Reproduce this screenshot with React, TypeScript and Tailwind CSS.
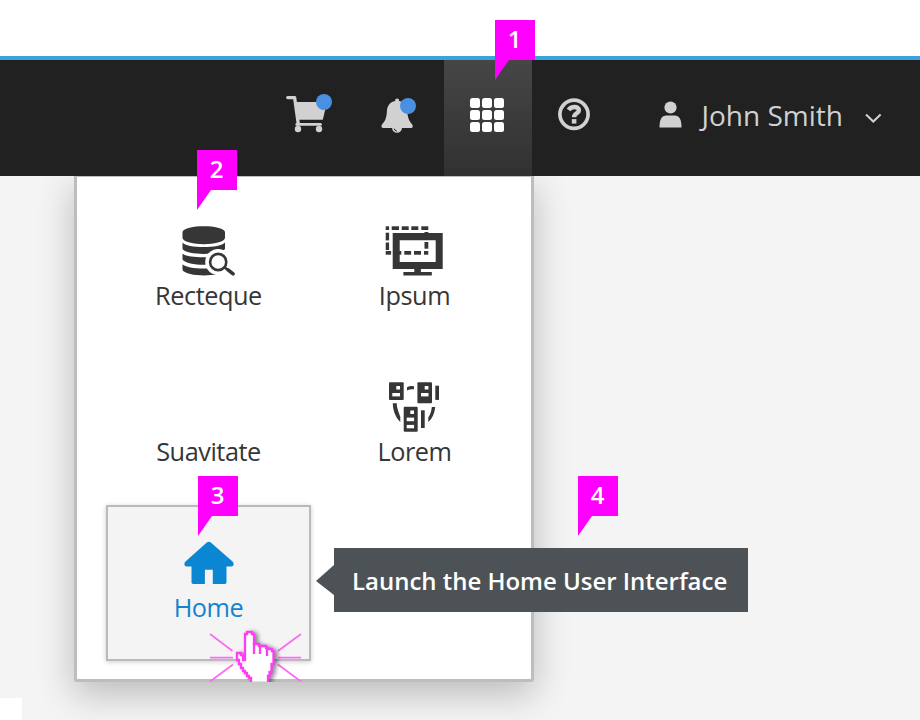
import type { ReactNode } from "react";

function CartIcon() {
  return (
    <svg className="h-14 w-14" viewBox="284 90 56 56" fill="#d1d1d1">
      <path d="M287.7 97.6H294.6L298.3 124" fill="none" stroke="#d1d1d1" strokeWidth="3.3" strokeLinecap="round" strokeLinejoin="round" />
      <path d="M296 102H327L322.8 119.8H299Z" />
      <path d="M296.8 124.4H320.5" stroke="#d1d1d1" strokeWidth="2.8" strokeLinecap="round" />
      <circle cx="298" cy="129" r="3.2" />
      <circle cx="319" cy="129" r="3.2" />
      <circle cx="324" cy="102" r="8" fill="#4a90e2" />
    </svg>
  );
}

function BellIcon() {
  return (
    <svg className="h-14 w-14" viewBox="372 90 56 56" fill="#d1d1d1">
      <path d="M395.2 101a2 2 0 1 1 3.8 0C404.5 102 407 106 407.3 111C407.6 118 409.5 121.5 412.2 124.5C413.3 126 413 128 411 128H383.2C381.2 128 381 126 382 124.5C385 121.5 386.6 118 386.9 111C387.2 106 389.7 102 395.2 101Z" />
      <path d="M392 127.5a5 5.3 0 0 0 10 0Z" />
      <path d="M394.2 128.7q.5 2.2 2.6 2.4" fill="none" stroke="#212121" strokeWidth="1" />
      <circle cx="408" cy="106" r="8" fill="#4a90e2" />
    </svg>
  );
}

function HelpIcon() {
  return (
    <svg className="h-14 w-14" viewBox="548 90 56 56" fill="none" stroke="#d1d1d1">
      <circle cx="574" cy="114.3" r="14.1" strokeWidth="3.7" />
      <path d="M568.6 109.9C571 106.3 578.9 105.8 578.9 110.3C578.9 113.4 574.1 113.2 574.1 117.2" strokeWidth="4.5" />
      <path d="M571.8 119.1H576.4V123.6H571.8Z" fill="#d1d1d1" stroke="none" />
    </svg>
  );
}

function UserIcon() {
  return (
    <svg className="h-7 w-[23px]" viewBox="658.5 101.5 23 28" fill="#d1d1d1">
      <circle cx="670" cy="108" r="6.1" />
      <path d="M659 128C659 120 661 116 666 116H674C679 116 681 120 681 128Z" />
    </svg>
  );
}

function DatabaseIcon() {
  return (
    <svg className="h-14 w-[60px]" viewBox="178.500 222 60 56" fill="#363636">
      <path d="M182 232C184 224.4 222.600 224.400 224.500 232V238C222.600 246.200 184 246.200 182 238Z" />
      <path d="M182 242.400C186 248.500 220 248.500 224.500 242.400V249C219 255.500 187 255.500 182 249Z" />
      <path d="M182 253.500C186 258.500 220 258.500 224.500 253.500V259.500C219 266.600 187 266.600 182 259.500Z" />
      <path d="M182 264.300C187 270 219 270 224.500 264.300V270C221 277.200 186 277.200 182 270Z" />
      <circle cx="217.700" cy="262" r="13" fill="#fff" />
      <path d="M224 267.500L233 276" stroke="#fff" strokeWidth="8" />
      <circle cx="217.700" cy="262" r="8.100" fill="none" stroke="#363636" strokeWidth="2.600" />
      <path d="M224 267.300L227 269.700" stroke="#363636" strokeWidth="2.400" />
      <path d="M227.500 269.800L232.600 273.800" stroke="#363636" strokeWidth="3.600" strokeLinecap="round" />
    </svg>
  );
}

const dashes = [
  [385.7, 226.3, 3.4, 3.7], [391.7, 226.3, 7.3, 3.7], [401.7, 226.3, 7, 3.7], [411.3, 226.3, 7, 3.7], [421.3, 226.3, 7, 3.7],
  [385.7, 232.7, 3.4, 7.7], [385.7, 242.5, 3.4, 7.5], [385.7, 251, 5.4, 3.7],
  [396.7, 251, 4.6, 3.7], [404.3, 251, 6.8, 3.7], [414, 251, 7, 3.7], [424, 251, 4.3, 3.7],
  [424.5, 232, 3.8, 2], [424.5, 242, 3.8, 6.7],
];

function ScreenIcon() {
  return (
    <svg className="h-14 w-[62px]" viewBox="384 222 62 56" fill="#363636">
      <path fillRule="evenodd" d="M392.700 233H442.700V269H392.700ZM399.700 240.300V262H435.700V240.300Z" />
      <path d="M414.300 268.500H420.900V272H431.800V275.600H403.400V272H414.300Z" />
      {dashes.map(([x, y, w, h]) => (
        <rect key={`${x}-${y}`} x={x} y={y} width={w} height={h} />
      ))}
    </svg>
  );
}

function ServersIcon() {
  return (
    <svg className="h-14 w-14" viewBox="387 378 56 56" fill="#363636">
      <rect x="389" y="382.300" width="14.700" height="17.600" rx="1" />
      <rect x="417.400" y="382.300" width="14.600" height="21" rx="1" />
      <rect x="403.700" y="406.700" width="14" height="25" rx="1" />
      <g fill="#fff">
        <rect x="396.300" y="386" width="3.700" height="3.500" />
        <rect x="392.300" y="393" width="7.700" height="3.400" />
        <rect x="424.700" y="386" width="3.700" height="3.500" />
        <rect x="421" y="393" width="7.500" height="3.400" />
        <rect x="410.300" y="410.500" width="3.700" height="3.500" />
        <rect x="406.700" y="417.600" width="7.400" height="3.600" />
        <rect x="406.700" y="424.900" width="7.400" height="3.400" />
      </g>
      <rect x="435.300" y="385.700" width="3.700" height="14.200" />
      <rect x="421" y="410.300" width="3.700" height="17.700" />
      <path d="M407 387.300Q410.500 385.300 414 386.300V389.300Q410.500 388.700 407 390.500Z" />
      <path d="M392.800 403.300H396.800C396.500 408 399.500 414 400.300 417V422C396 418 392.800 411 392.800 403.300Z" />
      <path d="M431.800 407H435.200C434.500 413 432.500 418.500 428.300 422V417.500C430.500 414 431.500 411 431.800 407Z" />
    </svg>
  );
}

function HomeIcon() {
  return (
    <svg className="h-14 w-14" viewBox="180.500 534 56 56" fill="#0a86d3">
      <path fillRule="evenodd" d="M206.300 542.600Q208.300 540.900 210.300 542.600L232 561.500C234 563.500 233 566.400 231 566.400H226V582.300Q226 584 224.300 584H212.300V569.800H204.400V584H192.700Q191 584 191 582.300V566.400H186C184 566.400 183 563.500 185 561.500Z" />
    </svg>
  );
}

function Tile({ icon, label, active = false }: { icon?: ReactNode; label: string; active?: boolean }) {
  return (
    <button
      className={`flex h-[156px] w-[205px] flex-col items-center border-2 pt-[27px] text-[25.3px] leading-[34px] tracking-[-0.45px] ${
        active ? "border-[#bababa] bg-[#f4f4f4] text-[#1583cf] shadow-[0_1px_5px_rgba(0,0,0,0.2)]" : "border-transparent text-[#363636]"
      }`}
    >
      <span className="flex h-14 items-center">{icon}</span>
      <span>{label}</span>
    </button>
  );
}

function Marker({ n, place }: { n: number; place: string }) {
  return (
    <div className={`absolute z-30 h-[60px] w-10 ${place}`}>
      <div className="flex h-10 items-center justify-center bg-[#ff00ff] pr-px text-[24px] font-semibold text-white">
        <span className="-mt-[2px] leading-10">{n}</span>
      </div>
      <svg className="block h-5 w-10" viewBox="0 0 40 20" fill="#ff00ff">
        <path d="M0 0H14L0 20Z" />
      </svg>
    </div>
  );
}

function ClickPointer() {
  return (
    <svg className="absolute left-[206px] top-[626px] z-20 h-[56px] w-[100px]" viewBox="206 626 100 56" fill="none">
      <g stroke="#fb6cf3" strokeWidth="1.800">
        <path d="M210 634L232.500 651M210 657.700H233M210 681.500L233 664.500M301 634L278 651M278 657.700H301M278 664.500L301 681.500" />
      </g>
      <g className="drop-shadow-[3px_1px_2px_rgba(0,0,0,0.45)]" stroke="#ff3cf5" strokeWidth="2.300" strokeLinejoin="miter">
        <path
          fill="#fff"
          d="M245 661V634H247V632H252V634H254V644H259V646H266V648H268V649H272V651H273.500V664H271.500V672H269.500V676H268V683H251V678H249V676H247V673H245V671H243V668H241V664H239V660H237V653H241V655H243V660H245"
        />
        <path d="M254 643V654M260 646V654M267 648V656" />
      </g>
    </svg>
  );
}

export default function App() {
  return (
    <div className="relative h-[720px] w-[920px] overflow-hidden bg-[#f4f4f4] font-['Open_Sans',sans-serif]">
      <div className="h-14 bg-white" />
      <header className="relative z-10 flex h-[120px] items-stretch border-t-4 border-[#38a3dc] bg-[#212121] pl-[268px] text-[#d1d1d1]">
        <div className="flex w-[88px] items-center justify-center"><CartIcon /></div>
        <div className="flex w-[88px] items-center justify-center"><BellIcon /></div>
        <div className="flex w-[88px] items-center justify-center bg-linear-to-b from-[#464646] to-[#313131]">
          <div className="-mt-[6px] -ml-[2px] grid grid-cols-3 gap-[2px]">
            {Array.from({ length: 9 }, (_, i) => (
              <span key={i} className="h-[10px] w-[10px] rounded-[2.5px] bg-white" />
            ))}
          </div>
        </div>
        <div className="flex w-[88px] items-center justify-center"><HelpIcon /></div>
        <div className="flex items-center pl-[38.5px]">
          <span className="-mt-[6px]"><UserIcon /></span>
          <span className="-mt-[6px] ml-[20px] w-[144px] whitespace-nowrap text-[28px] leading-10">John Smith</span>
          <svg className="ml-[18.5px] h-3 w-[18px]" viewBox="864 112 18 12" fill="none" stroke="#d1d1d1" strokeWidth="2">
            <path d="M866 114.500L873.300 121.500L880.600 114.500" />
          </svg>
        </div>
      </header>

      <main className="ml-[74px] grid h-[506px] w-[460px] grid-cols-[205px_205px] content-start gap-x-[1px] rounded-b-[3px] border-[3px] border-t border-[#bdbdbd] bg-white pl-[29px] pt-4 shadow-[0_12px_36px_rgba(0,0,0,0.24)]">
        <Tile icon={<DatabaseIcon />} label="Recteque" />
        <Tile icon={<ScreenIcon />} label="Ipsum" />
        <Tile label="Suavitate" />
        <Tile icon={<ServersIcon />} label="Lorem" />
        <Tile icon={<HomeIcon />} label="Home" active />
      </main>

      <div className="absolute left-0 top-[698px] h-[22px] w-[22px] bg-white" />

      <div className="absolute left-[316px] top-[548px] z-20 flex h-16 items-center">
        <svg className="h-8 w-[18px]" viewBox="0 0 18 32" fill="#4d5256">
          <path d="M18 1V31L0 17Z" />
        </svg>
        <div className="flex h-16 w-[414px] items-center whitespace-nowrap bg-[#4d5256] pl-[18px] text-[24px] font-semibold tracking-[-0.02px] text-white">
          <span className="mt-px">Launch the Home User Interface</span>
        </div>
      </div>

      <ClickPointer />
      <Marker n={1} place="left-[495px] top-5" />
      <Marker n={2} place="left-[197px] top-[150px]" />
      <Marker n={3} place="left-[198px] top-[476px]" />
      <Marker n={4} place="left-[578px] top-[476px]" />
    </div>
  );
}
